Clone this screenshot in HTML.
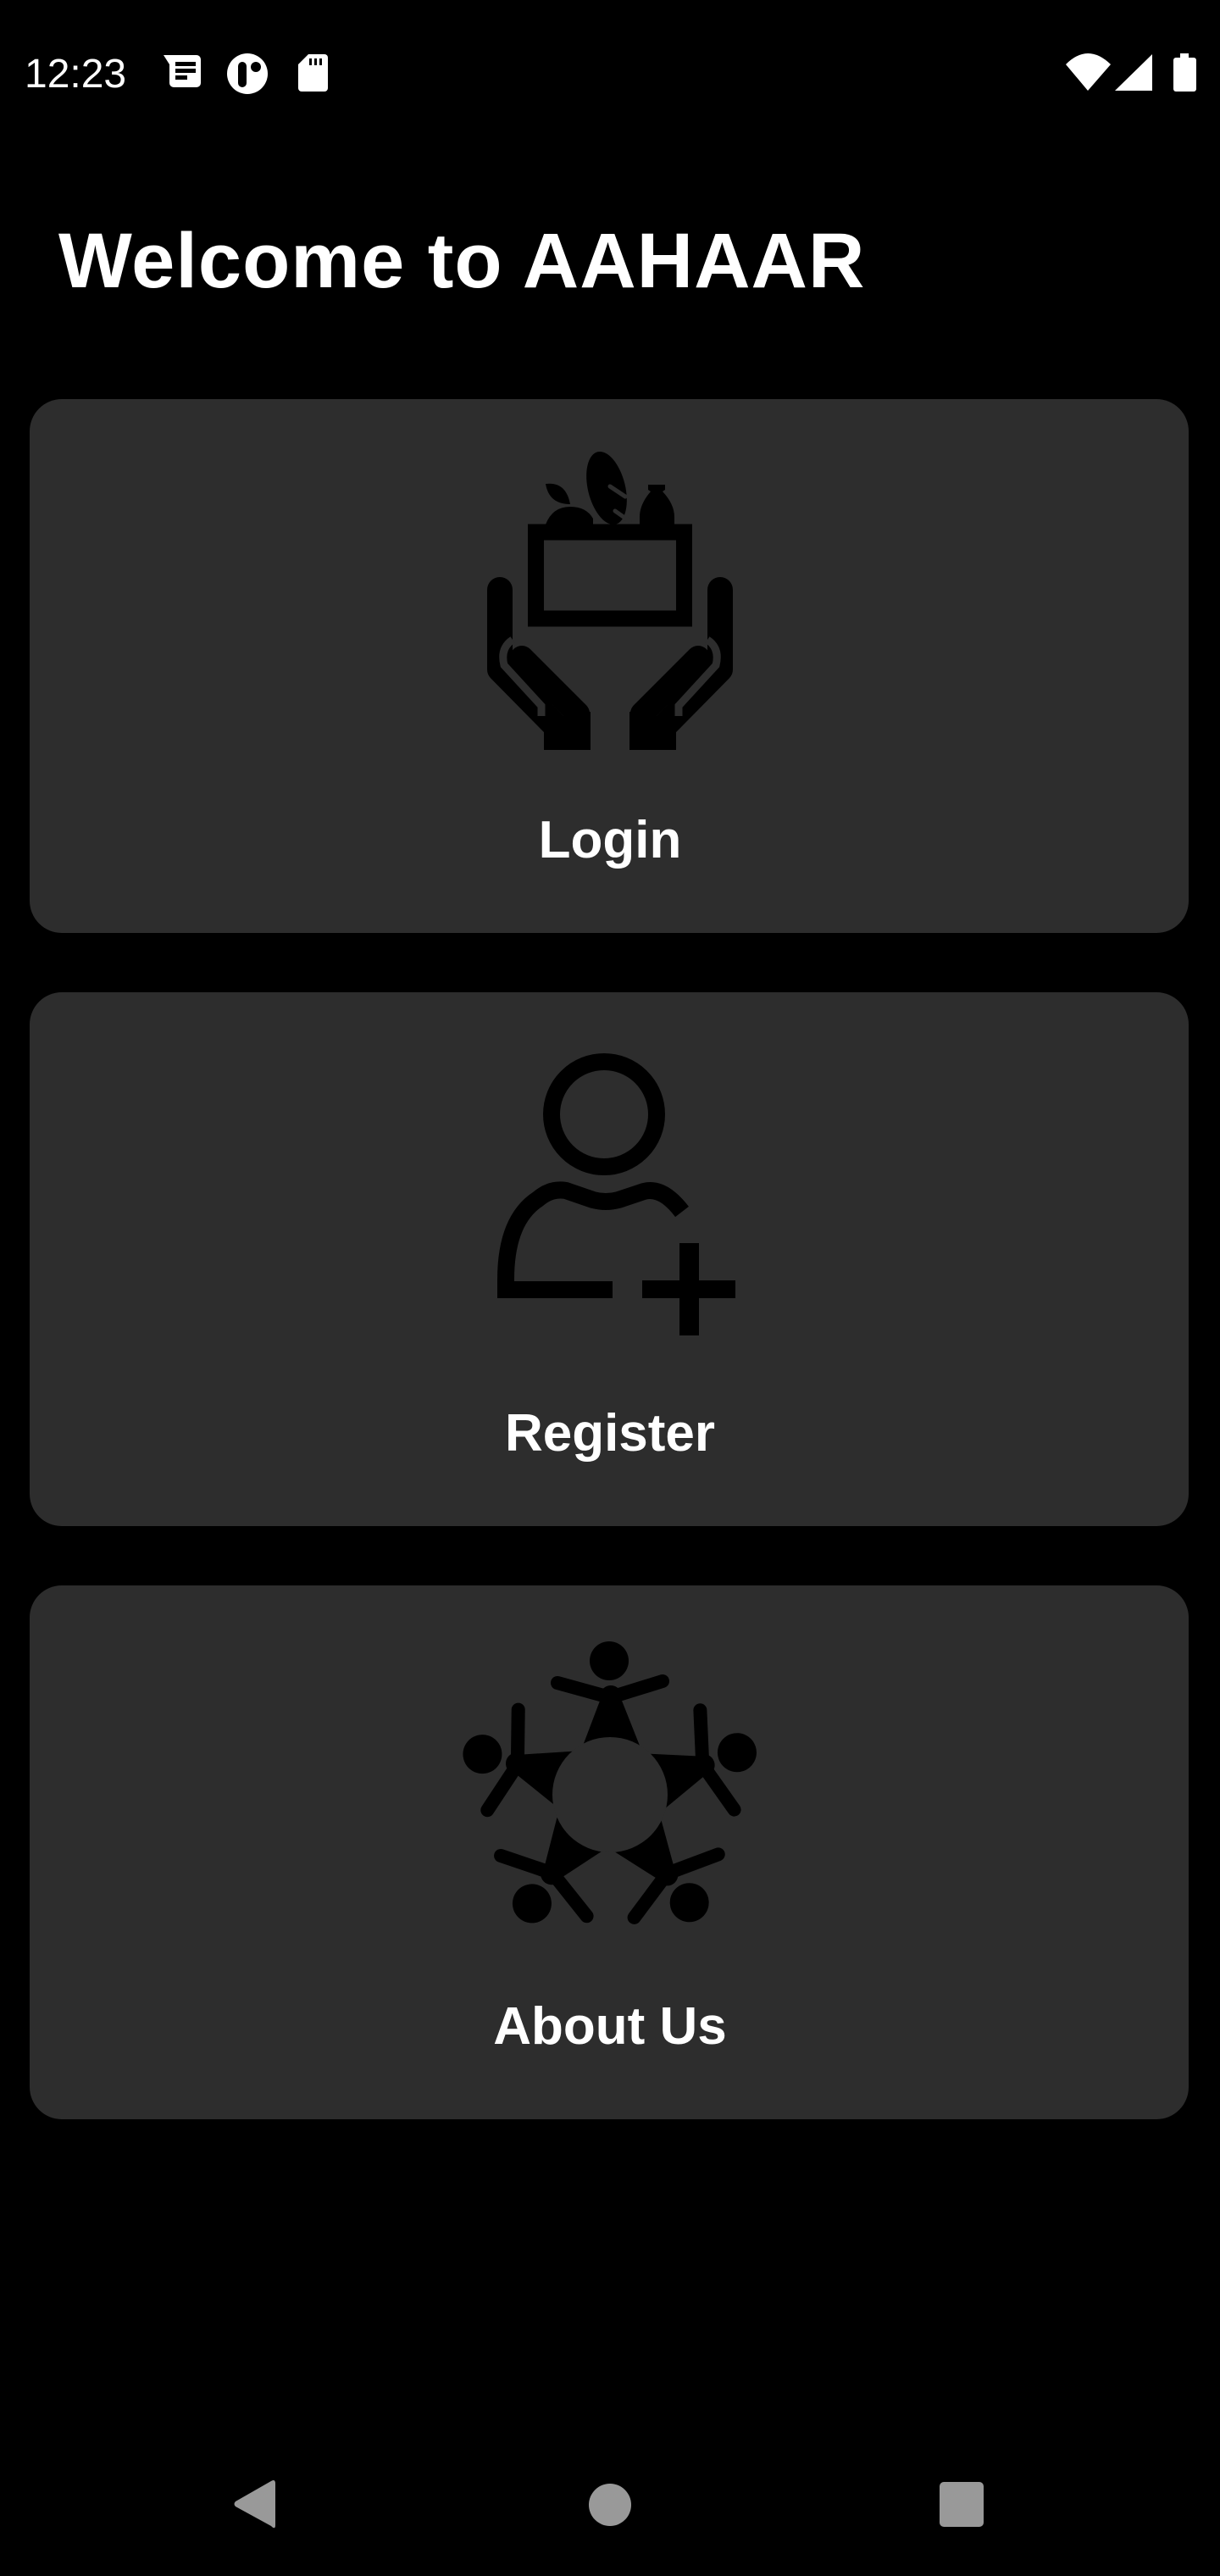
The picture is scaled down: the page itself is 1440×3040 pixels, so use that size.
<!DOCTYPE html>
<html><head><meta charset="utf-8">
<style>
html,body{margin:0;padding:0;background:#000;}
body{width:1440px;height:3040px;position:relative;overflow:hidden;font-family:"Liberation Sans",sans-serif;}
.abs{position:absolute;}
.card{position:absolute;left:35px;width:1368px;height:630px;background:#2d2d2d;border-radius:38px;}
.lbl{position:absolute;left:0;width:1440px;text-align:center;color:#fff;font-weight:bold;font-size:62px;line-height:62px;}
</style></head><body>
<div class="abs" style="left:29px;top:62px;color:#fff;font-size:48px;line-height:52px;">12:23</div>
<svg class="abs" style="left:0;top:0" width="1440" height="130">
  <path d="M193,65 H232 a5,5 0 0 1 5,5 V98 a5,5 0 0 1 -5,5 H205 a5,5 0 0 1 -5,-5 V76 Z" fill="#fff"/>
  <rect x="207" y="73" width="24" height="5" fill="#000"/><rect x="207" y="81" width="24" height="5" fill="#000"/><rect x="207" y="89" width="14" height="5" fill="#000"/>
  <circle cx="292" cy="87" r="24" fill="#fff"/>
  <rect x="281" y="73" width="10" height="30" rx="5" fill="#000"/>
  <circle cx="302" cy="79" r="6" fill="#000"/>
  <path d="M364,64 H383 a4,4 0 0 1 4,4 V104 a4,4 0 0 1 -4,4 H356 a4,4 0 0 1 -4,-4 V76 Z" fill="#fff"/>
  <rect x="365" y="69" width="3" height="8" fill="#000"/><rect x="371" y="69" width="3" height="8" fill="#000"/><rect x="377" y="69" width="3" height="8" fill="#000"/>
  <path d="M1258,76 Q1284,50 1311,76 L1284,107 Z" fill="#fff"/>
  <path d="M1316,107 L1360,64 V107 Z" fill="#fff"/>
  <rect x="1393" y="63" width="10" height="6" fill="#fff"/>
  <rect x="1385" y="68" width="27" height="40" rx="3" fill="#fff"/>
</svg>
<div class="abs" style="left:69px;top:258px;color:#fff;font-weight:bold;font-size:92px;line-height:100px;letter-spacing:1px;">Welcome to AAHAAR</div>

<div class="card" style="top:471px;"></div>
<div class="card" style="top:1171px;"></div>
<div class="card" style="top:1871px;"></div>

<svg class="abs" style="left:540px;top:500px" width="360" height="420" viewBox="0 0 360 420">
  <g id="hand">
    <path d="M50,196 V290 L117,358" stroke="#000" stroke-width="30" stroke-linecap="round" stroke-linejoin="round" fill="none"/>
    <rect x="102" y="345" width="55" height="40" fill="#000"/>
    <rect x="35" y="196" width="15" height="90" fill="#000"/>
    <path d="M65,255 Q50,265 55,285 L99,333 V345" stroke="#2d2d2d" stroke-width="9" fill="none"/>
    <path d="M76,276 L142,342" stroke="#000" stroke-width="28" stroke-linecap="round" fill="none"/>
    <rect x="130" y="340" width="27" height="45" fill="#000"/>
  </g>
  <use href="#hand" transform="translate(360,0) scale(-1,1)"/>
  <rect x="92.5" y="128" width="175" height="102" fill="none" stroke="#000" stroke-width="19"/>
  <path d="M104,119 Q112,98 133,98 Q152,98 160,112 L160,119 Z" fill="#000"/>
  <path d="M104,71 Q128,68 133,95 Q108,95 104,71 Z" fill="#000"/>
  <ellipse cx="176" cy="76" rx="22" ry="44" transform="rotate(-14 176 76)" fill="#000"/>
  <path d="M180,74 L198,86 M186,103 L203,115" stroke="#2d2d2d" stroke-width="5" stroke-linecap="round"/>
  <path d="M225,72 H245 V78 L242,80 Q256,95 256,110 V119 H215 V110 Q215,95 228,80 L225,78 Z" fill="#000"/>
</svg>
<div class="lbl" style="top:961px;">Login</div>

<svg class="abs" style="left:560px;top:1220px" width="330" height="370" viewBox="0 0 330 370">
  <circle cx="153" cy="95" r="62" fill="none" stroke="#000" stroke-width="20"/>
  <path d="M163,302 H37 V290 Q37,220 75,195 Q90,182 108,185 L140,196 Q155,200 170,196 L200,186 Q222,180 245,210" fill="none" stroke="#000" stroke-width="20"/>
  <rect x="242" y="247" width="23" height="109" fill="#000"/>
  <rect x="198" y="291" width="110" height="21" fill="#000"/>
</svg>
<div class="lbl" style="top:1661px;">Register</div>

<svg class="abs" style="left:520px;top:1910px" width="400" height="370" viewBox="0 0 400 370">
  <g id="kid">
    <circle cx="199" cy="50" r="23" fill="#000"/>
    <path d="M138,76 L196,92 M204,92 L262,74" stroke="#000" stroke-width="16" stroke-linecap="round"/>
    <circle cx="201" cy="92" r="13" fill="#000"/>
    <polygon points="190,92 212,92 235,150 168,150" fill="#000"/>
  </g>
  <use href="#kid" transform="rotate(-72 200 208)"/>
  <use href="#kid" transform="rotate(72 200 208)"/>
  <use href="#kid" transform="rotate(-144 200 208)"/>
  <use href="#kid" transform="rotate(144 200 208)"/>
  <circle cx="200" cy="208" r="68" fill="#2d2d2d"/>
</svg>
<div class="lbl" style="top:2361px;">About Us</div>

<svg class="abs" style="left:0;top:2900px" width="1440" height="110">
  <path d="M325,31 V80 Q325,86 320,81 L278,58 Q275,55 278,52 L320,28 Q325,25 325,31 Z" fill="#999"/>
  <circle cx="720" cy="56" r="25" fill="#999"/>
  <rect x="1109" y="29" width="52" height="53" rx="5" fill="#999"/>
</svg>
</body></html>
